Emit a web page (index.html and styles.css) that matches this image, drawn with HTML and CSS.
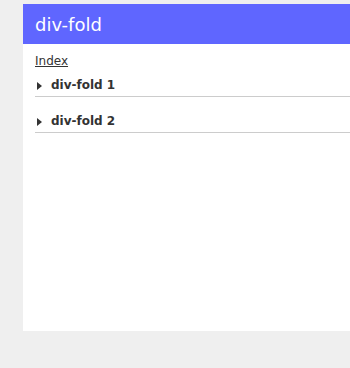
FILE: index.html
```html
<!DOCTYPE html>
<html>
  <head>
    <title>div-fold</title>
    <meta charset="utf-8">
    <link rel="stylesheet" href="styles.css">
  </head>
  <body>
    <div class="page">
      <h1 class="title">div-fold</h1>
      <div class="content">
        <p class="index"><a href="#">Index</a></p>
        <details class="fold">
          <summary>div-fold 1</summary>
          <p>Contenido del bloque 1</p>
        </details>
        <details class="fold">
          <summary>div-fold 2</summary>
          <p>Contenido del bloque 2</p>
        </details>
      </div>
    </div>
  </body>
</html>
```

FILE: styles.css
```css
* {font-family: 'DejaVu Sans', Verdana, sans-serif;}
body {margin: 0; background-color: #efefef; color: #333;}
.page {margin: 4px 0 0 23px; height: 327px; background-color: #fff;}
.title {margin: 0; height: 40px; display: flex; align-items: center; padding-left: 12px; font-size: 18px; font-weight: normal; color: #fff; background-color: #5f66ff;}
.content {padding-left: 12px;}
.index {margin: 0 0 10px; padding-top: 10px; font-size: 12px; line-height: 14px;}
.index a {color: #333;}
.fold {border-bottom: 1px solid #ccc; padding-bottom: 4px; margin-bottom: 17px; font-size: 12px;}
.fold summary {display: flex; align-items: center; list-style: none; font-weight: bold; line-height: 14px; cursor: pointer;}
.fold summary::-webkit-details-marker {display: none;}
.fold summary::before {content: ""; margin: 2px 9px 0 2px; border-left: 5px solid #333; border-top: 4px solid transparent; border-bottom: 4px solid transparent;}
.fold[open] summary::before {transform: rotate(90deg);}
.fold p {margin: 4px 0 0;}
```
